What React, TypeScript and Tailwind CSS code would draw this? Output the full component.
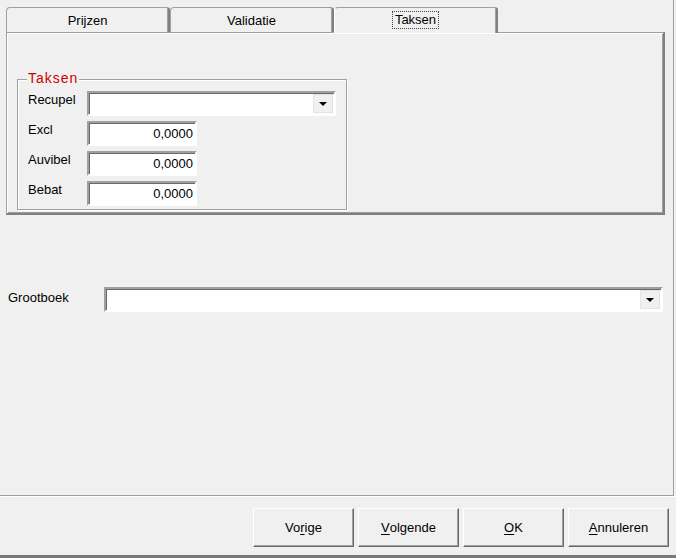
import React from "react";

const raised =
  "border-t border-l border-t-white border-l-white border-r border-b border-r-[#696969] border-b-[#696969] shadow-[inset_-1px_-1px_0_#a0a0a0]";
const sunken =
  "border-2 border-t-[#a0a0a0] border-l-[#a0a0a0] border-r-white border-b-white shadow-[inset_1px_1px_0_#696969] bg-white";

function DropArrow() {
  return (
    <div className="flex h-full w-[20px] items-center justify-center border border-[#e3e3e3] bg-[#f0f0f0]">
      <div className="mt-[1px] h-0 w-0 border-x-[4px] border-t-[4px] border-x-transparent border-t-black" />
    </div>
  );
}

function Combo({ width }: { width: string }) {
  return (
    <div className={`flex h-[25px] justify-end p-[1px] ${sunken} ${width}`}>
      <DropArrow />
    </div>
  );
}

function NumberField({ value }: { value: string }) {
  return (
    <div className={`flex h-[25px] w-[110px] items-center justify-end pr-[2px] ${sunken}`}>
      {value}
    </div>
  );
}

function Tab({ label, active }: { label: string; active?: boolean }) {
  if (active) {
    return (
      <div className="relative z-10 -mb-[1px] flex h-[26px] w-[164px] items-center justify-center rounded-tl-[4px] rounded-tr-[3px] border-l border-t border-l-white border-t-[#a0a0a0] border-r-2 border-r-[#808080] bg-[#f0f0f0] shadow-[inset_-1px_0_0_#a0a0a0]">
        <span className="-mt-[2px] border border-dotted border-[#444] px-[2px] leading-[16px]">{label}</span>
      </div>
    );
  }
  return (
    <div className="flex h-[25px] w-[164px] items-center justify-center rounded-tl-[4px] rounded-tr-[3px] border-l border-t border-[#a0a0a0] border-r-2 border-r-[#808080] bg-[#f0f0f0] shadow-[inset_-1px_0_0_#a0a0a0]">
      {label}
    </div>
  );
}

function Button({ children }: { children: React.ReactNode }) {
  return (
    <div className={`flex h-[39px] w-[101px] items-center justify-center bg-[#f0f0f0] ${raised}`}>
      {children}
    </div>
  );
}

const Key = ({ c }: { c: string }) => <span className="underline underline-offset-[2px]">{c}</span>;

export default function App() {
  const taxes = [
    { label: "Excl", value: "0,0000" },
    { label: "Auvibel", value: "0,0000" },
    { label: "Bebat", value: "0,0000" },
  ];

  return (
    <div className="h-[558px] w-[676px] overflow-hidden bg-[#f0f0f0] font-['Liberation_Sans',Arial,sans-serif] text-[13px] leading-[15px] text-black">
      <div className="h-[496px] w-[674px] border-b border-r border-[#a0a0a0] pl-[6px] pt-[7px]">
        {/* tab strip */}
        <div className="flex h-[25px] items-end">
          <Tab label="Prijzen" />
          <Tab label="Validatie" />
          <Tab label="Taksen" active />
        </div>

        {/* Taksen page */}
        <div className="h-[183px] w-[659px] border-l border-t border-[#a0a0a0] border-r-2 border-b-2 border-r-[#808080] border-b-[#808080] shadow-[inset_1px_1px_0_#fff,inset_-1px_-1px_0_#a0a0a0]">
          <div className="relative ml-[10px] mt-[46px] h-[131px] w-[330px] border border-[#a0a0a0] shadow-[1px_1px_0_#fff,inset_1px_1px_0_#fff]">
            <span className="absolute -top-[9px] left-[9px] bg-[#f0f0f0] px-[1px] text-[14px] tracking-[1px] text-[#d00000]">
              Taksen
            </span>
            <div className="flex flex-col gap-[5px] pl-[10px] pt-[11px]">
              <div className="flex items-start">
                <span className="w-[59px] pt-[1px]">Recupel</span>
                <Combo width="w-[249px]" />
              </div>
              {taxes.map((t) => (
                <div key={t.label} className="flex items-start">
                  <span className="w-[59px] pt-[1px]">{t.label}</span>
                  <NumberField value={t.value} />
                </div>
              ))}
            </div>
          </div>
        </div>

        <div className="mt-[72px] flex items-start">
          <span className="ml-[2px] w-[96px] pt-[3px]">Grootboek</span>
          <Combo width="w-[559px]" />
        </div>
      </div>

      {/* dialog buttons */}
      <div className="flex h-[59px] justify-end gap-[4px] border-t border-white pr-[7px] pt-[11px]">
        <Button>
          Vo<Key c="r" />ige
        </Button>
        <Button>
          <Key c="V" />olgende
        </Button>
        <Button>
          <Key c="O" />K
        </Button>
        <Button>
          <Key c="A" />nnuleren
        </Button>
      </div>
      <div className="h-[3px] bg-[#787878]" />
    </div>
  );
}
